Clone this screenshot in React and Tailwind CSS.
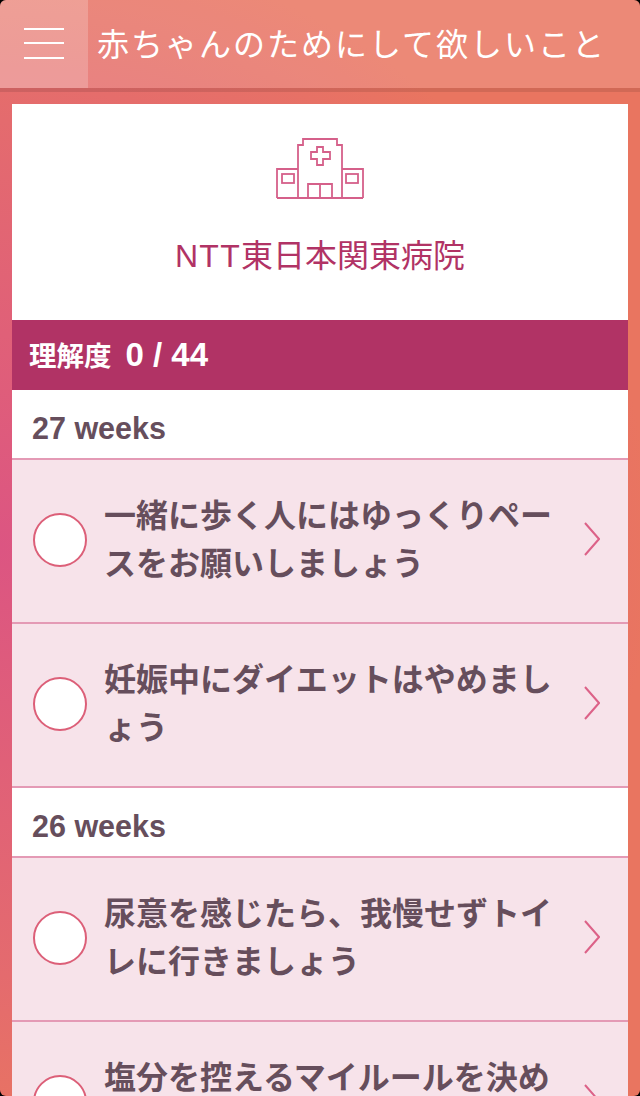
const font = { fontFamily: '"Noto Sans CJK JP", "Liberation Sans", sans-serif' };
const latin = { fontFamily: '"Liberation Sans", sans-serif' };

const sections = [
  {
    label: "27 weeks",
    items: ["一緒に歩く人にはゆっくりペースをお願いしましょう", "妊娠中にダイエットはやめましょう"],
  },
  {
    label: "26 weeks",
    items: ["尿意を感じたら、我慢せずトイレに行きましょう", "塩分を控えるマイルールを決めましょう"],
  },
];

function HospitalIcon() {
  return (
    <svg width="88" height="62" viewBox="0 0 88 62" fill="none" stroke="#d5608a" strokeWidth="1.8">
      <path d="M1 60V31H22M66 31H87V60M1 60H87" />
      <path d="M22 60V7H27V1H61V7H66V60" />
      <path d="M41 9H47V14H54V21H47V27H41V21H35V14H41Z" />
      <rect x="6" y="36" width="12" height="9" />
      <rect x="70" y="36" width="12" height="9" />
      <path d="M32 60V46H56V60M44 46V60" />
    </svg>
  );
}

function Row({ text }) {
  return (
    <div className="h-[164px] flex items-center bg-[#f7e3ea] border-b-2 border-[#e49ab5] pl-[21px] pr-[28px]">
      <div className="w-[54px] h-[54px] mb-[2px] shrink-0 rounded-full bg-white border-2 border-[#dc5f78]" />
      <p className="flex-1 ml-[17px] mr-[25px] pb-[8px] text-[32px] leading-[48px] font-bold text-[#664e5c] [line-break:loose]">
        {text}
      </p>
      <svg width="16" height="34" viewBox="0 0 16 34" fill="none" stroke="#dc6288" strokeWidth="2" className="shrink-0 mb-[4px]">
        <path d="M1 1L15 17L1 33" />
      </svg>
    </div>
  );
}

export default function App() {
  return (
    <div className="h-[1096px] bg-black">
      <div
        className="h-[1096px] rounded-[6px] overflow-hidden bg-[radial-gradient(ellipse_120%_65%_at_0%_50%,#dc5582_0%,#e46b6e_60%,#e97560_85%)]"
        style={font}
      >
        <header className="h-[92px] flex bg-white/15 bg-clip-padding border-b-4 border-black/10">
          <div className="w-[88px] h-[88px] flex flex-col justify-center items-center gap-[12.500px] pb-[2px] bg-white/20">
            <span className="block w-[40px] h-[2px] bg-white" />
            <span className="block w-[40px] h-[2px] bg-white" />
            <span className="block w-[40px] h-[2px] bg-white" />
          </div>
          <h1 className="ml-[9px] -mt-[2px] text-[32px] leading-[88px] font-normal tracking-[2px] whitespace-nowrap text-white">
            赤ちゃんのためにして欲しいこと
          </h1>
        </header>

        <main className="mx-[12px] mt-[12px] bg-white">
          <div className="h-[216px] flex flex-col items-center pt-[34px]">
            <HospitalIcon />
            <h2 className="mt-[31px] text-[32px] leading-[44px] font-normal text-[#b13365]">
              <span className="tracking-[1.300px]" style={latin}>NTT</span>東日本関東病院
            </h2>
          </div>

          <div className="h-[70px] flex items-center pl-[17px] gap-[14px] bg-[#b13365] text-white font-bold">
            <span className="text-[27.500px]">理解度</span>
            <span className="text-[33px]" style={latin}>0 / 44</span>
          </div>

          {sections.map((section) => (
            <section key={section.label}>
              <div
                className="h-[70px] flex items-center pl-[20px] pt-[10px] bg-white border-b-2 border-[#e49ab5] text-[30.500px] font-bold text-[#664e5c]"
                style={latin}
              >
                {section.label}
              </div>
              {section.items.map((item) => (
                <Row key={item} text={item} />
              ))}
            </section>
          ))}
        </main>
      </div>
    </div>
  );
}
